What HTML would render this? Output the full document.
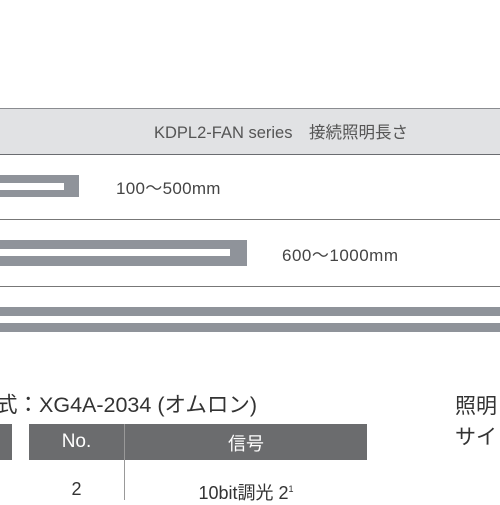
<!DOCTYPE html><html><head><meta charset="utf-8"><style>
body{margin:0;width:500px;height:500px;background:#fff;position:relative;overflow:hidden;font-family:"Liberation Sans","Noto Sans CJK JP",sans-serif;color:#444}
div{position:absolute}
.t{white-space:nowrap}
</style></head><body>
<div style="left:0;top:108px;width:500px;height:45px;background:#e1e2e4;border-top:1px solid #8a8c90;border-bottom:1px solid #6a6c70"></div>
<div class="t" style="left:154px;top:119px;font-size:16.5px;color:#555">KDPL2-FAN series　接続照明長さ</div>
<div style="left:0;top:175px;width:79px;height:22px;background:#8f939a"></div>
<div style="left:0;top:183px;width:64px;height:7px;background:#fff"></div>
<div class="t" style="left:116px;top:174px;font-size:17px;letter-spacing:0.3px;color:#444">100～500mm</div>
<div style="left:0;top:219px;width:500px;height:1px;background:#777"></div>
<div style="left:0;top:240px;width:247px;height:26px;background:#8f939a"></div>
<div style="left:0;top:249px;width:230px;height:7px;background:#fff"></div>
<div class="t" style="left:282px;top:241px;font-size:17px;letter-spacing:0.5px;color:#444">600～1000mm</div>
<div style="left:0;top:286px;width:500px;height:1px;background:#777"></div>
<div style="left:0;top:307px;width:500px;height:9px;background:#8f939a"></div>
<div style="left:0;top:323px;width:500px;height:9px;background:#8f939a"></div>
<div class="t" style="left:-4px;top:388px;font-size:21.5px;color:#333">式：XG4A-2034 (オムロン)</div>
<div class="t" style="left:455px;top:390px;font-size:21px;color:#333">照明</div>
<div class="t" style="left:455px;top:421px;font-size:21px;color:#333">サイ</div>
<div style="left:0;top:424px;width:12px;height:36px;background:#6b6c6e"></div>
<div style="left:29px;top:424px;width:338px;height:36px;background:#6b6c6e"></div>
<div style="left:124px;top:424px;width:1px;height:76px;background:#999"></div>
<div class="t" style="left:29px;top:431px;width:95px;text-align:center;font-size:19px;color:#fff">No.</div>
<div class="t" style="left:125px;top:430px;width:242px;text-align:center;font-size:18px;color:#fff">信号</div>
<div class="t" style="left:29px;top:479px;width:95px;text-align:center;font-size:18px;color:#333">2</div>
<div class="t" style="left:125px;top:479px;width:242px;text-align:center;font-size:18px;color:#333">10bit調光 2<sup style="font-size:9px">1</sup></div>
</body></html>
